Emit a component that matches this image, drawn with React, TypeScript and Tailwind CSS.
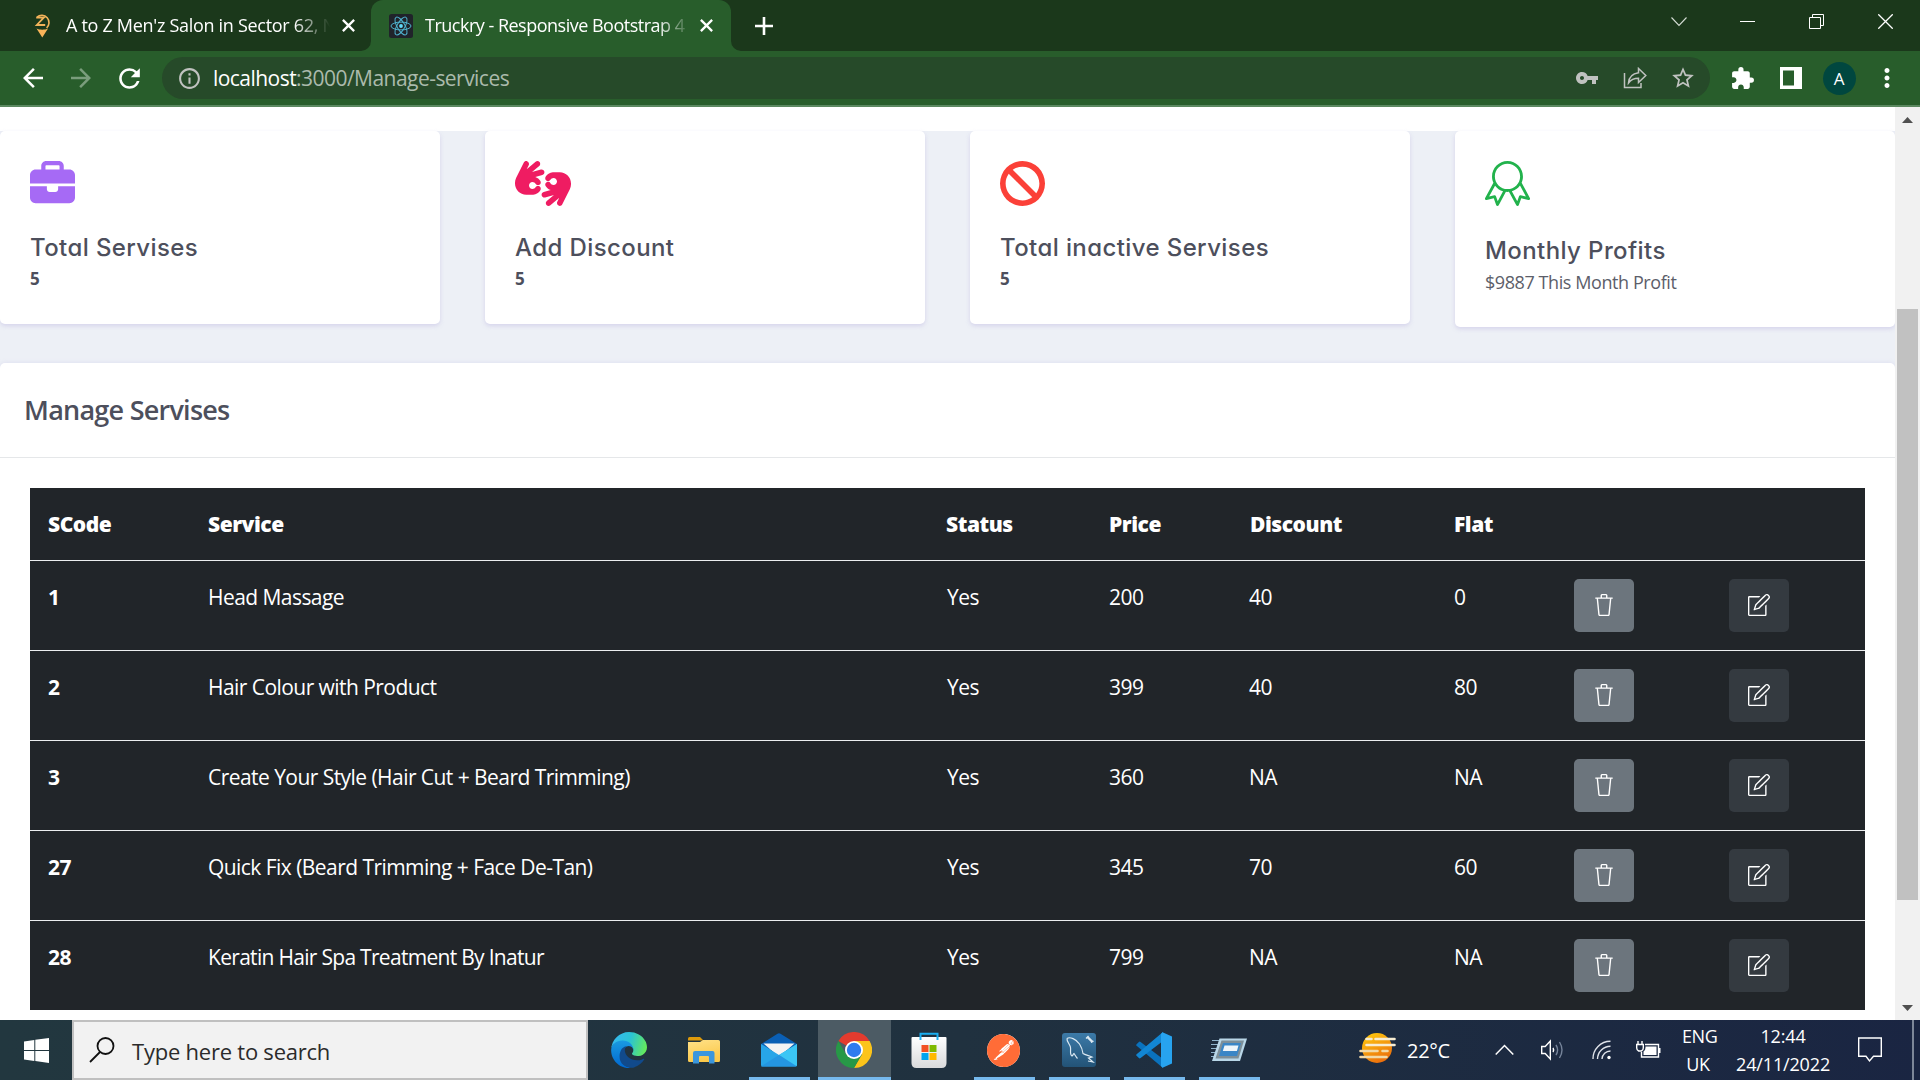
import React from "react";
import { FaBan, FaBriefcase, FaHandsAslInterpreting } from "react-icons/fa6";
import { SiPostman } from "react-icons/si";
import { SlTrash, SlNote, SlBadge } from "react-icons/sl";
import {
  MdArrowBack,
  MdArrowForward,
  MdRefresh,
  MdInfoOutline,
  MdVpnKey,
  MdExtension,
  MdStarBorder,
  MdMoreVert,
} from "react-icons/md";

type Row = {
  code: string;
  service: string;
  status: string;
  price: string;
  discount: string;
  flat: string;
  tight?: boolean;
};

const rows: Row[] = [
  { code: "1", service: "Head Massage", status: "Yes", price: "200", discount: "40", flat: "0" },
  { code: "2", service: "Hair Colour with Product", status: "Yes", price: "399", discount: "40", flat: "80" },
  { code: "3", service: "Create Your Style (Hair Cut + Beard Trimming)", status: "Yes", price: "360", discount: "NA", flat: "NA" },
  { code: "27", service: "Quick Fix (Beard Trimming + Face De-Tan)", status: "Yes", price: "345", discount: "70", flat: "60" },
  { code: "28", service: "Keratin Hair Spa Treatment By Inatur", status: "Yes", price: "799", discount: "NA", flat: "NA", tight: true },
];

const CloseGlyph = () => (
  <svg width="13" height="13" viewBox="0 0 12 12" fill="none" stroke="#fff" strokeWidth="2.1">
    <path d="M.8.8l10.4 10.4M11.2.8L.8 11.2" />
  </svg>
);

const PinFavicon = () => (
  <svg width="17" height="25" viewBox="0 0 17 25" fill="none">
    <path d="M3 4.2A7 7 0 1 1 12.6 15" stroke="#f2b35a" strokeWidth="1.6" />
    <path d="M2.5 15.5c3 1.6 8.500 1.600 11.500 0L8.300 24.500z" fill="#f8b459" />
    <path d="M2.200 4.600h7.600l-7 7.400h8.400" stroke="#f2b35a" strokeWidth="1.800" />
  </svg>
);

const ReactFavicon = () => (
  <svg width="24" height="24" viewBox="0 0 24 24" fill="none">
    <rect width="24" height="24" rx="2.5" fill="#20232a" />
    <g stroke="#4fb3cf" strokeWidth="1">
      <ellipse cx="12" cy="12" rx="10" ry="3.900" />
      <ellipse cx="12" cy="12" rx="10" ry="3.900" transform="rotate(60 12 12)" />
      <ellipse cx="12" cy="12" rx="10" ry="3.900" transform="rotate(120 12 12)" />
    </g>
    <circle cx="12" cy="12" r="1.900" fill="#61dafb" />
  </svg>
);

function TabStrip() {
  return (
    <div className="flex h-[51px] bg-[#1b381b] text-[18px] text-white">
      <div className="flex w-[371px] items-center pl-[34px]">
        <PinFavicon />
        <div className="ml-[15px] w-[266px] whitespace-nowrap tracking-[-0.3px] [mask-image:linear-gradient(to_right,black_228px,transparent_264px)]">
          A to Z Men&#39;z Salon in Sector 62, N
        </div>
        <div className="ml-[10px]">
          <CloseGlyph />
        </div>
      </div>
      <div className="relative flex w-[360px] items-center rounded-t-[12px] bg-[#285d2b] pl-[18px]">
        <svg className="absolute -left-[10px] bottom-0" width="10" height="10">
          <path d="M10 0v10H0A10 10 0 0 0 10 0z" fill="#285d2b" />
        </svg>
        <svg className="absolute -right-[10px] bottom-0" width="10" height="10">
          <path d="M0 0v10h10A10 10 0 0 1 0 0z" fill="#285d2b" />
        </svg>
        <ReactFavicon />
        <div className="ml-[12px] w-[260px] whitespace-nowrap tracking-[-0.5px] [mask-image:linear-gradient(to_right,black_232px,transparent_266px)]">
          Truckry - Responsive Bootstrap 4
        </div>
        <div className="ml-[15px]">
          <CloseGlyph />
        </div>
      </div>
      <div className="flex w-[65px] items-center justify-center">
        <svg width="18" height="18" viewBox="0 0 18 18" stroke="#fff" strokeWidth="2.6">
          <path d="M9 0v18M0 9h18" />
        </svg>
      </div>
      <div className="ml-auto flex h-[43px] items-center">
        <div className="flex w-[68px] justify-center">
          <svg width="16" height="10" viewBox="0 0 16 10" fill="none" stroke="#d5ddd5" strokeWidth="1.1">
            <path d="M.5.5L8 8.500 15.500.5" />
          </svg>
        </div>
        <div className="flex w-[69px] justify-center">
          <div className="h-px w-[15px] bg-white" />
        </div>
        <div className="flex w-[69px] justify-center">
          <svg width="15" height="15" viewBox="0 0 15 15" fill="none" stroke="#fff">
            <path d="M.5 3.500h11v11H.5zM3.500 3.500v-3h11v11h-3" />
          </svg>
        </div>
        <div className="flex w-[69px] justify-center">
          <svg width="15" height="15" viewBox="0 0 15 15" stroke="#fff" strokeWidth="1.300">
            <path d="M.300.300l14.400 14.400M14.700.300L.300 14.700" />
          </svg>
        </div>
      </div>
    </div>
  );
}

function Toolbar() {
  return (
    <div className="flex h-[56px] items-center border-b-2 border-[#5b8860] bg-[#285d2b] pr-[9px] pl-[9px] text-white">
      <div className="flex w-[48px] justify-center pr-[1px]">
        <MdArrowBack size={30} />
      </div>
      <div className="flex w-[48px] justify-center text-[#7a9d7c]">
        <MdArrowForward size={30} />
      </div>
      <div className="flex w-[48px] justify-center">
        <MdRefresh size={31} />
      </div>
      <div className="ml-[9px] flex h-[42px] w-[1548px] items-center rounded-full bg-[#264a29] pr-[3px] pl-[15px] text-[#c0c2c0]">
        <MdInfoOutline size={25} />
        <div className="ml-[11px] text-[21px] leading-[42px] tracking-[-0.54px] text-[#abbaac]">
          <span className="text-white">localhost</span>:3000/Manage-services
        </div>
        <div className="ml-auto flex w-[48px] justify-center">
          <MdVpnKey size={24} />
        </div>
        <div className="flex w-[48px] justify-center">
          <svg width="24" height="22" viewBox="0 0 24 22" fill="none" stroke="currentColor" strokeWidth="1.500">
            <path d="M1.500 6v14.500h16.500V16" />
            <path d="M15.500 1.500v4.300C9.500 6.600 6 10 5.500 16c2.500-3.400 5.600-4.700 10-4.700v4.200L22.800 8.500z" />
          </svg>
        </div>
        <div className="flex w-[48px] justify-center">
          <MdStarBorder size={26} />
        </div>
      </div>
      <div className="ml-[8px] flex w-[48px] justify-center">
        <MdExtension size={25} />
      </div>
      <div className="ml-px flex w-[48px] justify-center">
        <svg width="22" height="22" viewBox="0 0 22 22">
          <path fillRule="evenodd" d="M0 0h22v22H0zM3 3.500v15h11v-15z" fill="#fff" />
        </svg>
      </div>
      <div className="flex w-[48px] justify-center">
        <div className="flex size-[33px] items-center justify-center rounded-full bg-[#00473f] text-[17px] leading-none">A</div>
      </div>
      <div className="flex w-[48px] justify-center">
        <MdMoreVert size={30} />
      </div>
    </div>
  );
}

type CardProps = { icon: React.ReactNode; title: string; tall?: boolean; children: React.ReactNode };

function StatCard({ icon, title, tall, children }: CardProps) {
  return (
    <div
      className={`w-[440px] rounded-[5px] bg-white pt-[30px] pl-[30px] text-[#4d4f5c] shadow-[0_2px_4px_0_rgba(187,180,225,0.45)] ${
        tall ? "h-[196px]" : "h-[193px]"
      }`}
    >
      <div className={tall ? "h-[48px]" : "h-[45px]"}>{icon}</div>
      <div className="mt-[27px] font-['Inter',sans-serif] text-[24px] leading-[30px] font-[450] tracking-[0.4px] [font-feature-settings:'cv11']">
        {title}
      </div>
      <div className="mt-[4px] leading-[24px]">{children}</div>
    </div>
  );
}

const grid = "grid grid-cols-[160px_738px_163px_141px_204px_121px_155px_153px]";

function ServicesTable() {
  return (
    <div className="mx-[30px] mt-[30px] h-[522px] bg-[#212529] text-[21px] text-white">
      <div className={`${grid} h-[73px] border-b border-[#eceef0] leading-[73px] font-extrabold tracking-[-0.45px]`}>
        {["SCode", "Service", "Status", "Price", "Discount", "Flat"].map((h) => (
          <div key={h} className="pl-[18px]">
            {h}
          </div>
        ))}
      </div>
      {rows.map((r) => (
        <div
          key={r.code}
          className={`${grid} h-[90px] border-b border-[#eceef0] pt-[18px] leading-[37px] tracking-[-0.55px] last:border-b-0`}
        >
          <div className="pl-[18px] font-bold">{r.code}</div>
          <div className={`pl-[18px] ${r.tight ? "tracking-[-0.7px]" : ""}`}>{r.service}</div>
          <div className="pl-[19px]">{r.status}</div>
          <div className="pl-[18px]">{r.price}</div>
          <div className="pl-[17px]">{r.discount}</div>
          <div className="pl-[18px]">{r.flat}</div>
          <div className="pl-[17px]">
            <button className="flex h-[53px] w-[60px] items-center justify-center rounded-[5px] bg-[#6c757d] pb-[2px]">
              <SlTrash size={22} />
            </button>
          </div>
          <div className="pl-[17px]">
            <button className="flex h-[53px] w-[60px] items-center justify-center rounded-[5px] bg-[#343a40] pr-[1px] pb-[2px]">
              <SlNote size={22} />
            </button>
          </div>
        </div>
      ))}
    </div>
  );
}

function Page() {
  return (
    <div className="flex h-[913px] bg-[#edf0f6]">
      <div className="flex w-[1895px] flex-col overflow-hidden">
        <div className="h-[24px] shrink-0 bg-white" />
        <div className="flex h-[232px] shrink-0 items-start gap-[45px]">
          <StatCard icon={<FaBriefcase size={45} className="text-[#a66af5]" />} title="Total Servises">
            <span className="text-[17px] font-bold">5</span>
          </StatCard>
          <StatCard icon={<FaHandsAslInterpreting className="h-[45px] w-[56px] text-[#ef1c62]" />} title="Add Discount">
            <span className="text-[17px] font-bold">5</span>
          </StatCard>
          <StatCard icon={<FaBan size={45} className="text-[#fb4038]" />} title="Total inactive Servises">
            <span className="text-[17px] font-bold">5</span>
          </StatCard>
          <StatCard tall icon={<SlBadge size={45} className="text-[#22b24c]" />} title="Monthly Profits">
            <span className="text-[18px] tracking-[-0.42px] text-[#5c5e6a]">$9887 This Month Profit</span>
          </StatCard>
        </div>
        <div className="flex-1 rounded-t-[5px] bg-white shadow-[0_0_4px_rgba(187,180,225,0.35)]">
          <div className="h-[95px] border-b border-[#e5e7e9] pl-[24px] text-[27px] leading-[94px] font-semibold tracking-[-0.75px] text-[#4d4f5c]">
            Manage Servises
          </div>
          <ServicesTable />
        </div>
      </div>
      <div className="flex w-[25px] flex-col items-center bg-[#f1f1f1]">
        <div className="mt-[10px] h-[6px] w-[11px] bg-[#505050] [clip-path:polygon(50%_0,100%_100%,0_100%)]" />
        <div className="mt-[186px] h-[591px] w-[21px] bg-[#c1c1c1]" />
        <div className="mt-auto mb-[9px] h-[6px] w-[11px] bg-[#505050] [clip-path:polygon(0_0,100%_0,50%_100%)]" />
      </div>
    </div>
  );
}

const EdgeIcon = () => (
  <svg width="36" height="36" viewBox="0 0 256 256">
    <defs>
      <linearGradient id="edgeTop" x1="0" y1="0.400" x2="1" y2="0.600">
        <stop offset="0" stopColor="#35b8f1" />
        <stop offset="0.500" stopColor="#2bc3d2" />
        <stop offset="1" stopColor="#66eb58" />
      </linearGradient>
      <linearGradient id="edgeLeft" x1="0.500" y1="0" x2="0.500" y2="1">
        <stop offset="0" stopColor="#1b9de2" />
        <stop offset="1" stopColor="#0067d0" />
      </linearGradient>
    </defs>
    <path
      fill="url(#edgeLeft)"
      d="M106 242c-9-5-17-13-23-21-26-35-18-85 17-111 4-3 8-5 12-7 3-1 8-4 15-4 10 0 19 5 25 13 4 5 6 12 6 18 0 0 24-79-79-79C37 51 1 92 1 128c0 19 4 38 12 55 28 59 95 88 157 68-21 7-45 3-64-9z"
    />
    <path
      fill="#114a8b"
      d="M231 190c-3 2-7 3-10 5-11 4-23 6-36 6-47 0-87-32-87-73 0-11 6-22 16-27-42 2-53 46-53 72 0 73 67 80 82 80 8 0 20-2 27-4 27-9 51-28 66-53 3-5-1-8-5-6z"
    />
    <path
      fill="url(#edgeTop)"
      d="M152 149c-1 1-3 2-3 6 0 2 2 5 5 7 14 10 41 9 42 9 10 0 21-3 30-9 19-11 30-31 30-53 0-22-8-37-11-43C224 24 178 0 129 0 59 0 3 56 1 126c1-36 37-66 79-66 4 0 23 0 42 10 16 9 24 19 30 29 6 11 7 24 7 29 0 6-2 14-7 21z"
    />
  </svg>
);

const FolderIcon = () => (
  <svg width="32" height="27" viewBox="0 0 32 27">
    <defs>
      <linearGradient id="folder" x1="0" y1="0" x2="0.300" y2="1">
        <stop offset="0" stopColor="#ffe188" />
        <stop offset="1" stopColor="#fbc94a" />
      </linearGradient>
    </defs>
    <path d="M0 1.500Q0 0 1.500 0h10.500l3.500 3.500H0z" fill="#dd9a0b" />
    <path d="M0 5h12l3-2h15.500Q32 3 32 4.500V23.500q0 1.500-1.500 1.500H1.500Q0 25 0 23.500z" fill="url(#folder)" />
    <path d="M5 26.500V16q0-2 2-2h17.500q2 0 2 2v10.500H21V20q0-1-1-1h-8q-1 0-1 1v6.500z" fill="#3b96dc" />
  </svg>
);

const MailIcon = () => (
  <svg width="36" height="34" viewBox="0 0 36 34">
    <path d="M0 11L16.500.700q1.500-1 3 0L36 11v6H0z" fill="#0a5fb4" />
    <path d="M2.500 10.500h31L18 24z" fill="#f3f3f3" />
    <path d="M0 11l18 11L36 11v21q0 1.500-1.500 1.500h-33Q0 33.500 0 32z" fill="#27a5e8" />
    <path d="M36 11L18 22l17.500 11q.5-.4.5-1.500z" fill="#3bc6f5" />
    <path d="M18 22L0 33.500h35.500z" fill="#2496e2" />
  </svg>
);

const ChromeIcon = () => (
  <svg width="36" height="36" viewBox="0 0 36 36">
    <path d="M18 18L2.400 9A18 18 0 0 1 33.600 9z" fill="#e33b2e" />
    <path d="M18 9h15.600A18 18 0 0 1 18 36l7.800-13.500z" fill="#fcc41a" />
    <path d="M2.400 9A18 18 0 0 0 18 36l7.800-13.500-15.600 0z" fill="#279847" />
    <circle cx="18" cy="18" r="9" fill="#fff" />
    <circle cx="18" cy="18" r="7.200" fill="#2f7bee" />
  </svg>
);

const StoreIcon = () => (
  <svg width="36" height="36" viewBox="0 0 36 36">
    <defs>
      <linearGradient id="bag" x1="0" y1="0" x2="0" y2="1">
        <stop offset="0" stopColor="#fff" />
        <stop offset="1" stopColor="#d9dadb" />
      </linearGradient>
    </defs>
    <path d="M.500 6q0-1 1-1h33q1 0 1 1v25q0 5-5 5h-25q-5 0-5-5z" fill="url(#bag)" />
    <path d="M9.500 8V1.800h17V8" fill="none" stroke="#1aaef0" strokeWidth="2" />
    <path d="M10.500 13h7v7h-7z" fill="#f25022" />
    <path d="M18.500 13h7v7h-7z" fill="#7fba00" />
    <path d="M10.500 21h7v7h-7z" fill="#00a4ef" />
    <path d="M18.500 21h7v7h-7z" fill="#ffb900" />
  </svg>
);

const WorkbenchIcon = () => (
  <svg width="34" height="34" viewBox="0 0 34 34" fill="none">
    <defs>
      <linearGradient id="wb" x1="0" y1="0" x2="0" y2="1">
        <stop offset="0" stopColor="#3c7aa8" />
        <stop offset="1" stopColor="#235377" />
      </linearGradient>
    </defs>
    <rect width="34" height="34" rx="3" fill="url(#wb)" />
    <path
      d="M5 5.500C8 3.500 14 6 17.500 11c2 3 3 6 3.500 9.500 2.500 1.500 6 2 9 3.500l-3.500 1 4.500 4-5-1M5 5.500c-.5 3 3 5.500 3.500 9 .5 3-1 7 1.500 8.500 1 0 1-2 2-2.500 1.500 2 2 3.500 3.500 5"
      stroke="#dce9f2"
      strokeWidth="1.200"
    />
    <path d="M25.500 4l5 5" stroke="#dce9f2" strokeWidth="2.400" />
    <path d="M24 5.500l2.500-2.500M29 9.500l2.500-1.500" stroke="#dce9f2" strokeWidth="1.300" />
  </svg>
);

const CodeIcon = () => (
  <svg width="36" height="36" viewBox="0 0 36 36">
    <path d="M.6 12.200l2.300-2.300q.8-.7 1.700 0L27 27v9L.6 13.800q-.9-.8 0-1.600z" fill="#0a72bd" />
    <path d="M.6 23.800l2.300 2.300q.8.700 1.700 0L27 9V0L.6 22.200q-.9.800 0 1.600z" fill="#1286d3" />
    <path d="M26.500.2L36 4.500v27L26.500 35.800 25 34V2z" fill="#27a3ef" />
  </svg>
);

const RunIcon = () => (
  <svg width="36" height="24" viewBox="0 0 36 24">
    <path d="M1 2.500h8M0 6.500h8M0 10.500h7M0 14.500h6M0 18.500h4" stroke="#8fb3cc" strokeWidth="1.200" />
    <path d="M8.500.5h27.500L29 23H1z" fill="#b9d7e8" />
    <path d="M10.500 2.500h22.500L27.500 20.500H4.500z" fill="#7d8f99" />
    <path d="M12 5h18l-4 13H8z" fill="#3a86c6" />
    <path d="M13.500 7.500h14l-1.600 5.500H11.800z" fill="#eef5fa" />
  </svg>
);

const WeatherIcon = () => (
  <svg width="37" height="31" viewBox="0 0 37 31">
    <defs>
      <linearGradient id="sun" x1="0.200" y1="0" x2="0.700" y2="1">
        <stop offset="0" stopColor="#ffc90e" />
        <stop offset="1" stopColor="#ea6a0c" />
      </linearGradient>
    </defs>
    <circle cx="18" cy="15" r="15" fill="url(#sun)" />
    <path d="M7.500 6h5M16.500 6h19M7.500 12h28" stroke="#f7ecd2" strokeWidth="2.600" strokeLinecap="round" />
    <path d="M1.500 18h17M23.500 18h5M1.500 24h26" stroke="#f2d9a6" strokeWidth="2.600" strokeLinecap="round" />
  </svg>
);

type TaskbarApp = { name: string; icon: React.ReactNode; open?: boolean; active?: boolean };

const apps: TaskbarApp[] = [
  { name: "Edge", icon: <EdgeIcon /> },
  { name: "Explorer", icon: <FolderIcon /> },
  { name: "Mail", icon: <MailIcon />, open: true },
  { name: "Chrome", icon: <ChromeIcon />, active: true },
  { name: "Store", icon: <StoreIcon /> },
  {
    name: "Postman",
    open: true,
    icon: (
      <div className="rounded-full bg-white">
        <SiPostman size={33} className="text-[#ff6c37]" />
      </div>
    ),
  },
  { name: "Workbench", icon: <WorkbenchIcon />, open: true },
  { name: "Code", icon: <CodeIcon />, open: true },
  { name: "Run", icon: <RunIcon />, open: true },
];

function Taskbar() {
  return (
    <div className="flex h-[60px] bg-linear-to-r from-[#22373f] via-[#20313f] to-[#1a2542] text-white">
      <div className="flex w-[72px] items-center justify-center">
        <svg width="25" height="25" viewBox="0 0 25 25" fill="#fff">
          <path d="M0 3.400l10.300-1.400v10H0zM11.300 1.800L25 0v12H11.300zM0 13h10.300v9.900L0 21.500zM11.300 13H25v12l-13.700-1.900z" />
        </svg>
      </div>
      <div className="flex w-[516px] items-center border-2 border-[#c0c0c0] bg-[#f2f2f2] pl-[15px]">
        <svg width="26" height="26" viewBox="0 0 26 26" fill="none" stroke="#111" strokeWidth="1.800">
          <circle cx="16.500" cy="9" r="8" />
          <path d="M11 15L1 25" />
        </svg>
        <div className="ml-[17px] pt-[2px] text-[22px] tracking-[-0.23px] text-[#2b2b2b]">Type here to search</div>
      </div>
      <div className="ml-[5px] flex gap-[2px]">
        {apps.map((a) => (
          <div key={a.name} className={`flex w-[73px] flex-col items-center ${a.active ? "bg-[#4c5b64]" : ""}`}>
            <div className="flex h-[57px] items-center pt-[3px] pr-[2px]">{a.icon}</div>
            {a.open && <div className="h-[3px] w-[61px] bg-[#76b9ed]" />}
            {a.active && <div className="h-[3px] w-full bg-[#76b9ed]" />}
          </div>
        ))}
      </div>
      <div className="ml-auto flex items-center text-[18px] leading-[28px]">
        <div className="pb-[4px]">
          <WeatherIcon />
        </div>
        <div className="ml-[11px] w-[88px] pt-[2px] text-[20px] tracking-[-0.3px]">22°C</div>
        <svg className="w-[46px] shrink-0" width="46" height="12" viewBox="0 0 46 12" fill="none" stroke="#fff" strokeWidth="1.500">
          <path d="M.700 10.500L9.500 1.500l8.800 9" />
        </svg>
        <svg width="51" height="22" viewBox="0 0 51 22" fill="none" stroke="#fff" strokeWidth="1.400">
          <path d="M.700 7.500h3.500L9.300 2v18l-5.100-5.500H.700z" />
          <path d="M12 9q1.300 2 0 4" />
          <path d="M15 6q3.200 5 0 10M18.500 3q5 8 0 16" stroke="#76849a" />
        </svg>
        <svg width="44" height="20" viewBox="0 0 44 20" fill="none" stroke="#dfe3ea" strokeWidth="1.400">
          <path d="M1 19A17.500 17.500 0 0 1 18.500 1.200M5.500 19A13 13 0 0 1 18.500 6.200M10 19a8.500 8.500 0 0 1 8.500-8" />
          <circle cx="17" cy="17.500" r="1.700" fill="#fff" stroke="none" />
        </svg>
        <svg width="46" height="19" viewBox="0 0 46 19" fill="none" stroke="#fff" strokeWidth="1.400">
          <path d="M9 3.500h13.500V16H5.500V11M23.800 7v5M2 0v3M6 0v3M.700 3.500h6.600v3.500q0 2-2 3h-2.600q-2-1-2-3z" />
          <path d="M9.500 5.500h11v8.500H7.500v-3.500q2-1 2-4z" fill="#fff" stroke="none" />
        </svg>
        <div className="w-[34px] pr-[2px] text-center tracking-[-0.4px]">
          <div>ENG</div>
          <div>UK</div>
        </div>
        <div className="ml-[20px] w-[94px] text-center tracking-[-0.15px]">
          <div>12:44</div>
          <div>24/11/2022</div>
        </div>
        <svg className="ml-[28px]" width="24" height="26" viewBox="0 0 24 26" fill="none" stroke="#fff" strokeWidth="1.400">
          <path d="M.700 1h22.600v18.300H15.500L11.500 24l-3.500-4.700H.700z" />
        </svg>
        <div className="ml-[30px] h-[60px] w-[2px] bg-[#7d8799]" />
        <div className="w-[6px]" />
      </div>
    </div>
  );
}

export default function App() {
  return (
    <div className="flex h-[1080px] w-[1920px] flex-col overflow-hidden font-['Open_Sans','Noto_Sans',sans-serif]">
      <TabStrip />
      <Toolbar />
      <Page />
      <Taskbar />
    </div>
  );
}
